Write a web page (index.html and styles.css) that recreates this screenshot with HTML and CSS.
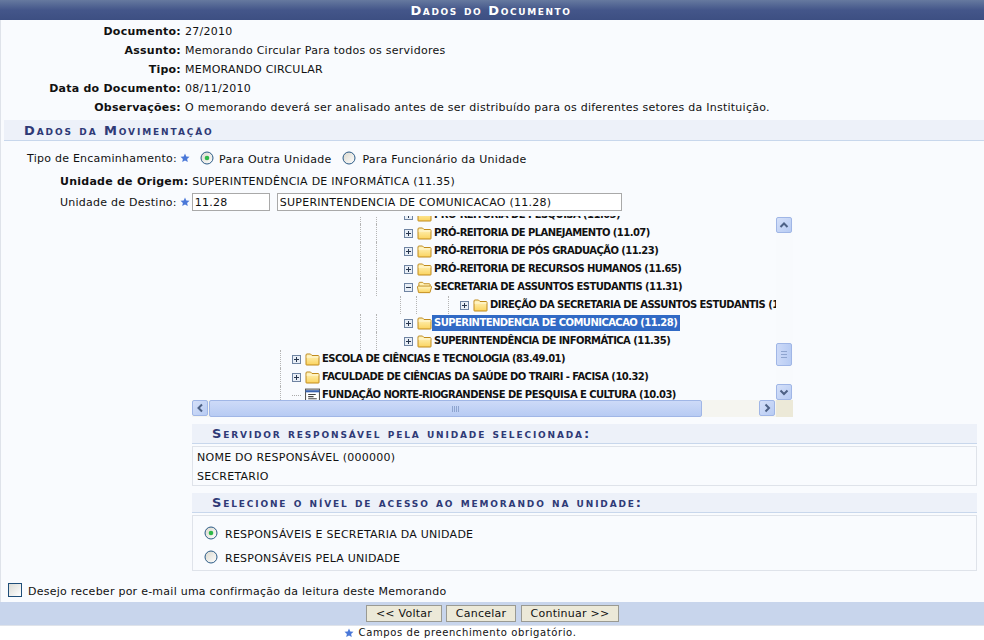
FILE: index.html
```html
<!DOCTYPE html>
<html lang="pt-BR">
<head>
<meta charset="utf-8">
<title>Dados do Documento</title>
<link rel="stylesheet" href="styles.css">
</head>
<body>
<svg class="defs" width="0" height="0" aria-hidden="true">
  <defs>
    <linearGradient id="fg" x1="0" y1="0" x2="0" y2="1"><stop offset="0" stop-color="#fff6c4"/><stop offset="1" stop-color="#fbd35e"/></linearGradient>
    <linearGradient id="rg" x1="0" y1="0" x2="1" y2="1"><stop offset="0" stop-color="#d9d7cc"/><stop offset="1" stop-color="#ffffff"/></linearGradient>
    <symbol id="folder" viewBox="0 0 15 14"><path d="M1 12.500V3q0-1 1-1h3.500l1.500 1.500h6q1 0 1 1v8q0 .5-.5.5h-12q-.5 0-.5-.5z" fill="url(#fg)" stroke="#c08a1c"/><path d="M1.500 5h12" stroke="#fff8d8"/></symbol>
    <symbol id="folder-open" viewBox="0 0 16 14"><path d="M2 11V3q0-1 1-1h3l1.500 1.500H13q1 0 1 1V6" fill="#fff2b8" stroke="#c08a1c"/><path d="M.5 7q0-1 1-1h13q1 0 1 1l-1.500 5.500q0 .5-.5.500H2q-.5 0-.5-.5z" fill="url(#fg)" stroke="#c08a1c"/></symbol>
    <symbol id="plus" viewBox="0 0 9 9"><rect x=".5" y=".5" width="8" height="8" fill="#e8eef6" stroke="#6f84a2"/><path d="M2 4.500h5M4.500 2v5" stroke="#27364e"/></symbol>
    <symbol id="minus" viewBox="0 0 9 9"><rect x=".5" y=".5" width="8" height="8" fill="#e8eef6" stroke="#6f84a2"/><path d="M2 4.500h5" stroke="#27364e"/></symbol>
    <symbol id="doc" viewBox="0 0 14 12"><rect x=".5" y=".5" width="13" height="11" fill="#fff" stroke="#555"/><path d="M.5 2.500h13" stroke="#3a63b0" stroke-width="2"/><path d="M3 5.500h7M3 7.500h5M3 9.500h8" stroke="#444"/></symbol>
    <symbol id="star" viewBox="0 0 10 10"><path d="M5 .5l1.300 3 3.200.3-2.400 2.100.7 3.200L5 7.400 2.200 9.100l.7-3.200L.5 3.800l3.200-.3z" fill="#4a78d8"/></symbol>
    <symbol id="radio-on" viewBox="0 0 14 14"><circle cx="7" cy="7" r="6" fill="url(#rg)" stroke="#2a5a86"/><circle cx="7" cy="7" r="2.300" fill="#2fb84a"/></symbol>
    <symbol id="radio-off" viewBox="0 0 14 14"><circle cx="7" cy="7" r="6" fill="url(#rg)" stroke="#2a5a86"/></symbol>
    <symbol id="arrow-up" viewBox="0 0 14 14"><path d="M3.500 9L7 5.500 10.500 9" fill="none" stroke="#4d6185" stroke-width="2"/></symbol>
    <symbol id="arrow-down" viewBox="0 0 14 14"><path d="M3.500 5.500L7 9l3.500-3.500" fill="none" stroke="#4d6185" stroke-width="2"/></symbol>
    <symbol id="arrow-left" viewBox="0 0 14 14"><path d="M9 3.500L5.500 7 9 10.500" fill="none" stroke="#4d6185" stroke-width="2"/></symbol>
    <symbol id="arrow-right" viewBox="0 0 14 14"><path d="M5.500 3.500L9 7l-3.500 3.500" fill="none" stroke="#4d6185" stroke-width="2"/></symbol>
  </defs>
</svg>

<main class="panel">
  <h1 class="panel-title">Dados do Documento</h1>

  <dl class="info">
    <dt>Documento:</dt><dd>27/2010</dd>
    <dt>Assunto:</dt><dd>Memorando Circular Para todos os servidores</dd>
    <dt>Tipo:</dt><dd>MEMORANDO CIRCULAR</dd>
    <dt>Data do Documento:</dt><dd>08/11/2010</dd>
    <dt>Observações:</dt><dd>O memorando deverá ser analisado antes de ser distribuído para os diferentes setores da Instituição.</dd>
  </dl>

  <h2 class="section-title">Dados da Movimentação</h2>

  <div class="route">
    <span class="route-label">Tipo de Encaminhamento:</span>
    <svg class="star"><use href="#star"/></svg>
    <svg class="radio"><use href="#radio-on"/></svg>
    <span class="route-option">Para Outra Unidade</span>
    <svg class="radio"><use href="#radio-off"/></svg>
    <span class="route-option">Para Funcionário da Unidade</span>
  </div>

  <div class="origin"><strong>Unidade de Origem:</strong> <span>SUPERINTENDÊNCIA DE INFORMÁTICA (11.35)</span></div>

  <div class="dest">
    <span class="dest-label">Unidade de Destino:</span>
    <svg class="star"><use href="#star"/></svg>
    <input class="code" type="text" value="11.28">
    <input class="name" type="text" value="SUPERINTENDENCIA DE COMUNICACAO (11.28)">
  </div>

  <div class="tree-frame">
    <div class="tree-view">
      <div class="tree-rows">
        <div class="node l3"><i class="g a"></i><i class="g b"></i><svg class="tog"><use href="#plus"/></svg><svg class="fld"><use href="#folder"/></svg><span>PRÓ-REITORIA DE PESQUISA (11.05)</span></div>
        <div class="node l3"><i class="g a"></i><i class="g b"></i><svg class="tog"><use href="#plus"/></svg><svg class="fld"><use href="#folder"/></svg><span>PRÓ-REITORIA DE PLANEJAMENTO (11.07)</span></div>
        <div class="node l3"><i class="g a"></i><i class="g b"></i><svg class="tog"><use href="#plus"/></svg><svg class="fld"><use href="#folder"/></svg><span>PRÓ-REITORIA DE PÓS GRADUAÇÃO (11.23)</span></div>
        <div class="node l3"><i class="g a"></i><i class="g b"></i><svg class="tog"><use href="#plus"/></svg><svg class="fld"><use href="#folder"/></svg><span>PRÓ-REITORIA DE RECURSOS HUMANOS (11.65)</span></div>
        <div class="node l3"><i class="g a"></i><i class="g b"></i><svg class="tog"><use href="#minus"/></svg><svg class="fld"><use href="#folder-open"/></svg><span>SECRETARIA DE ASSUNTOS ESTUDANTIS (11.31)</span></div>
        <div class="node l4"><i class="g c"></i><i class="g d"></i><i class="g e"></i><svg class="tog"><use href="#plus"/></svg><svg class="fld"><use href="#folder"/></svg><span>DIREÇÃO DA SECRETARIA DE ASSUNTOS ESTUDANTIS (11.32)</span></div>
        <div class="node l3"><i class="g a"></i><i class="g b"></i><svg class="tog"><use href="#plus"/></svg><svg class="fld"><use href="#folder"/></svg><span class="sel">SUPERINTENDENCIA DE COMUNICACAO (11.28)</span></div>
        <div class="node l3"><i class="g a"></i><i class="g b"></i><svg class="tog"><use href="#plus"/></svg><svg class="fld"><use href="#folder"/></svg><span>SUPERINTENDÊNCIA DE INFORMÁTICA (11.35)</span></div>
        <div class="node l2"><i class="g f"></i><svg class="tog"><use href="#plus"/></svg><svg class="fld"><use href="#folder"/></svg><span>ESCOLA DE CIÊNCIAS E TECNOLOGIA (83.49.01)</span></div>
        <div class="node l2"><i class="g f"></i><svg class="tog"><use href="#plus"/></svg><svg class="fld"><use href="#folder"/></svg><span>FACULDADE DE CIÊNCIAS DA SAÚDE DO TRAIRI - FACISA (10.32)</span></div>
        <div class="node l2"><i class="g f"></i><i class="stub"></i><svg class="fld"><use href="#doc"/></svg><span>FUNDAÇÃO NORTE-RIOGRANDENSE DE PESQUISA E CULTURA (10.03)</span></div>
      </div>
    </div>
    <div class="vbar">
      <span class="sb-btn"><svg><use href="#arrow-up"/></svg></span>
      <span class="vspace-top"></span>
      <span class="vthumb"></span>
      <span class="vspace-bottom"></span>
      <span class="sb-btn"><svg><use href="#arrow-down"/></svg></span>
    </div>
    <div class="hbar">
      <span class="sb-btn"><svg><use href="#arrow-left"/></svg></span>
      <span class="hthumb"></span>
      <span class="hspace"></span>
      <span class="sb-btn"><svg><use href="#arrow-right"/></svg></span>
    </div>
    <div class="corner"></div>
  </div>

  <section class="sub">
    <h3 class="sub-title">Servidor responsável pela unidade selecionada:</h3>
    <div class="sub-box people">
      <p>NOME DO RESPONSÁVEL (000000)</p>
      <p>SECRETARIO</p>
    </div>
  </section>

  <section class="sub">
    <h3 class="sub-title">Selecione o nível de acesso ao memorando na unidade:</h3>
    <div class="sub-box access">
      <div class="access-row"><svg class="radio"><use href="#radio-on"/></svg><span>RESPONSÁVEIS E SECRETARIA DA UNIDADE</span></div>
      <div class="access-row"><svg class="radio"><use href="#radio-off"/></svg><span>RESPONSÁVEIS PELA UNIDADE</span></div>
    </div>
  </section>

  <label class="confirm"><span class="check"></span><span>Desejo receber por e-mail uma confirmação da leitura deste Memorando</span></label>

  <div class="actions">
    <button class="btn voltar" type="button">&lt;&lt; Voltar</button>
    <button class="btn cancelar" type="button">Cancelar</button>
    <button class="btn continuar" type="button">Continuar &gt;&gt;</button>
  </div>
</main>

<p class="note"><svg class="star"><use href="#star"/></svg><span>Campos de preenchimento obrigatório.</span></p>
</body>
</html>
```
FILE: styles.css
```css
* { box-sizing: border-box; }
html, body { margin: 0; padding: 0; background: #fff; }
body { width: 984px; height: 640px; overflow: hidden; font: 11px/13px "DejaVu Sans", Verdana, sans-serif; letter-spacing: .25px; color: #111; }
.defs { position: absolute; }

.panel { background: #f9fbfe; border-left: 1px solid #dfe3ea; border-bottom: 1px solid #dfe3ea; height: 626px; }
.panel-title {
  margin: 0 0 0 -1px; height: 20px; padding-right: 2px; text-align: center; color: #fff;
  font: bold 13px/21px "DejaVu Sans", sans-serif; font-variant: small-caps; letter-spacing: 1.6px;
  background: linear-gradient(#66799f 0, #44568a 50%, #3d4f82 100%);
}

.info { display: grid; grid-template-columns: 180px 1fr; column-gap: 4px; row-gap: 6px; margin: 0; padding-top: 5px; height: 100px; align-content: start; }
.info dt { font-weight: bold; text-align: right; margin: 0; }
.info dd { margin: 0; }

.section-title {
  margin: 0 0 0 3px; height: 21px; padding-left: 20px; background: #edf1f9; border-bottom: 1px solid #c8d7ec;
  font: bold 13px/21px "DejaVu Sans", sans-serif; font-variant: small-caps; letter-spacing: 1.9px; color: #2f3a76;
}

.star { width: 10px; height: 10px; flex: none; }
.radio { width: 14px; height: 14px; flex: none; }

.route { display: flex; align-items: center; height: 20px; margin-top: 7px; padding-left: 26px; }
.route-label { margin-right: 3px; }
.route .radio { margin-left: 10px; margin-right: 5px; }
.route-option { margin-top: 2px; }
.route-option + .radio { margin-left: 11px; margin-right: 6px; }

.origin { height: 24px; padding: 7px 0 0 59px; }

.dest { display: flex; align-items: center; height: 20px; padding-left: 59px; }
.dest-label { margin-right: 3px; }
.dest .star { margin-right: 2px; }
.dest input { height: 18px; padding: 0 2px; border: 1px solid #a9a9a9; background: #fff; font: 11px "DejaVu Sans", sans-serif; letter-spacing: .25px; color: #111; border-radius: 0; outline: 0; }
.code { width: 78px; margin-right: 7px; }
.name { width: 345px; }

.tree-frame { display: grid; grid-template-columns: 584px 17px; grid-template-rows: 184px 17px; width: 601px; margin: 4px 0 0 191px; }
.tree-view { overflow: hidden; position: relative; }
.tree-rows { margin-top: -10px; }
.node { position: relative; height: 18px; display: flex; align-items: center; white-space: nowrap; font: bold 10px/14px "DejaVu Sans", sans-serif; letter-spacing: -.55px; color: #111; }
.node.l2 { padding-left: 100px; }
.node.l3 { padding-left: 212px; }
.node.l4 { padding-left: 268px; }
.tog { width: 9px; height: 9px; flex: none; margin-right: 4px; }
.fld { width: 15px; height: 14px; flex: none; }
.node > span { padding: 0 3px 0 2px; line-height: 16px; }
.sel { background: #316ac5; color: #fff; }
.stub { width: 9px; height: 0; flex: none; margin-right: 4px; border-top: 1px dotted #aaa; }
.g { position: absolute; top: 0; bottom: 0; width: 0; border-left: 1px dotted #b5b5b5; }
.g.a { left: 168px; }
.g.b { left: 184px; }
.g.c { left: 208px; }
.g.d { left: 224px; }
.g.e { left: 256px; }
.g.f { left: 88px; }

.vbar { display: flex; flex-direction: column; background: #f8fafd; padding: 1px 1px 0 0; }
.hbar { display: flex; background: #f5f5f0; padding-right: 1px; }
.corner { background: #ece9d8; }
.sb-btn { width: 16px; height: 16px; flex: none; border: 1px solid #a0b6e6; border-radius: 2px; background: linear-gradient(135deg, #d5e0f9, #b7cbf3); display: block; }
.sb-btn svg { width: 14px; height: 14px; display: block; }
.vspace-top { height: 110px; flex: none; }
.vthumb {
  height: 23px; width: 16px; flex: none; border: 1px solid #a0b6e6; border-radius: 2px;
  background: linear-gradient(#8ea4cf, #8ea4cf) center 7px / 6px 1px no-repeat, linear-gradient(#8ea4cf, #8ea4cf) center 10px / 6px 1px no-repeat, linear-gradient(#8ea4cf, #8ea4cf) center 13px / 6px 1px no-repeat, linear-gradient(90deg, #cddaf8, #b7cbf3);
}
.vspace-bottom { flex: 1; }
.hthumb {
  width: 493px; flex: none; margin-left: 1px; border: 1px solid #a0b6e6; border-radius: 2px;
  background: repeating-linear-gradient(90deg, #8ea4cf 0 1px, transparent 1px 2px) center / 7px 6px no-repeat, linear-gradient(#cddaf8, #b7cbf3);
}
.hspace { flex: 1; }

.sub { margin: 7px 0 0 191px; width: 785px; }
.sub-title {
  margin: 0; height: 20px; padding-left: 20px; background: #edf1f9; border-bottom: 1px solid #c8d7ec;
  font: bold 13px/20px "DejaVu Sans", sans-serif; font-variant: small-caps; letter-spacing: 1.85px; color: #2f3a76;
}
.sub-box { margin-top: 2px; border: 1px solid #dfe3ea; }
.people { height: 40px; padding: 4px 0 0 4px; }
.people p { margin: 0 0 6px; }
.access { height: 56px; padding: 10px 0 0 11px; }
.access-row { display: flex; align-items: center; height: 14px; margin-bottom: 10px; }
.access-row .radio { margin-right: 7px; }
.access-row span { margin-top: 2px; }

.confirm { display: flex; align-items: center; height: 14px; margin: 12px 0 0 7px; }
.check { width: 14px; height: 14px; margin-right: 6px; border: 1px solid #1f4e79; background: linear-gradient(135deg, #dcdcd6, #fff); }
.confirm span + span { margin-top: 2px; }

.actions { display: flex; justify-content: center; align-items: center; gap: 4px; height: 23px; margin: 5px 0 0 -1px; padding-left: 1px; background: #c8d5ec; }
.btn { height: 17px; padding: 0; border: 1px solid #9a9a92; background: #ece9d8; font: 11px/15px "DejaVu Sans", sans-serif; letter-spacing: .25px; color: #111; border-radius: 0; }
.voltar { width: 76px; }
.cancelar { width: 70px; }
.continuar { width: 98px; margin-left: 1px; }

.note { display: flex; justify-content: center; align-items: center; gap: 5px; margin: 0; height: 13px; font-size: 10px; letter-spacing: .6px; padding-right: 64px; }
```
